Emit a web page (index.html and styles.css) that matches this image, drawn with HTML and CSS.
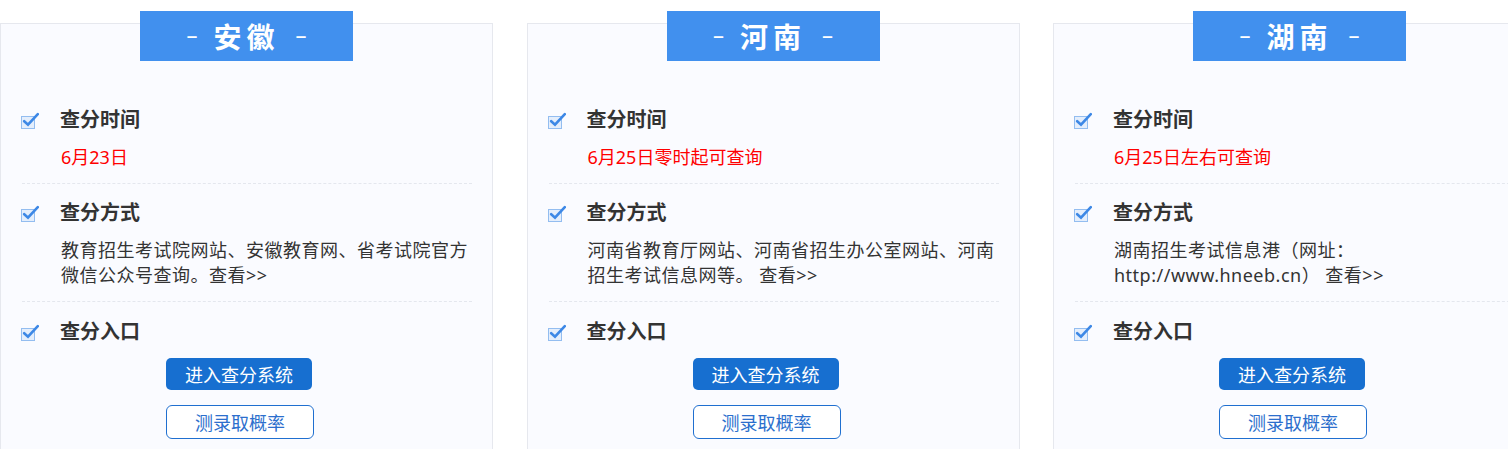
FILE: index.html
```html
<!DOCTYPE html>
<html lang="zh-CN">
<head>
<meta charset="utf-8">
<title>查分</title>
<link rel="stylesheet" href="styles.css">
</head>
<body>
<div class="cards">
  <section class="card">
    <div class="tab"><span class="dash">–</span><span class="name">安徽</span><span class="dash">–</span></div>
    <div class="item">
      <h3 class="head"><svg class="chk" width="18" height="17" viewBox="0 0 18 17"><rect x="0.5" y="4.5" width="13" height="12" fill="#e4eefc" stroke="#93bdf0"/><path d="M3.2 9.2 L7 12.6 L16.8 2.2" stroke="#3d88e6" stroke-width="2.6" fill="none" stroke-linecap="round"/></svg>查分时间</h3>
      <p class="txt red">6月23日</p>
    </div>
    <div class="item">
      <h3 class="head"><svg class="chk" width="18" height="17" viewBox="0 0 18 17"><rect x="0.5" y="4.5" width="13" height="12" fill="#e4eefc" stroke="#93bdf0"/><path d="M3.2 9.2 L7 12.6 L16.8 2.2" stroke="#3d88e6" stroke-width="2.6" fill="none" stroke-linecap="round"/></svg>查分方式</h3>
      <p class="txt">教育招生考试院网站、安徽教育网、省考试院官方微信公众号查询。查看&gt;&gt;</p>
    </div>
    <div class="item last">
      <h3 class="head"><svg class="chk" width="18" height="17" viewBox="0 0 18 17"><rect x="0.5" y="4.5" width="13" height="12" fill="#e4eefc" stroke="#93bdf0"/><path d="M3.2 9.2 L7 12.6 L16.8 2.2" stroke="#3d88e6" stroke-width="2.6" fill="none" stroke-linecap="round"/></svg>查分入口</h3>
      <div class="btns">
        <a class="btn primary">进入查分系统</a>
        <a class="btn outline">测录取概率</a>
      </div>
    </div>
  </section>

  <section class="card">
    <div class="tab"><span class="dash">–</span><span class="name">河南</span><span class="dash">–</span></div>
    <div class="item">
      <h3 class="head"><svg class="chk" width="18" height="17" viewBox="0 0 18 17"><rect x="0.5" y="4.5" width="13" height="12" fill="#e4eefc" stroke="#93bdf0"/><path d="M3.2 9.2 L7 12.6 L16.8 2.2" stroke="#3d88e6" stroke-width="2.6" fill="none" stroke-linecap="round"/></svg>查分时间</h3>
      <p class="txt red">6月25日零时起可查询</p>
    </div>
    <div class="item">
      <h3 class="head"><svg class="chk" width="18" height="17" viewBox="0 0 18 17"><rect x="0.5" y="4.5" width="13" height="12" fill="#e4eefc" stroke="#93bdf0"/><path d="M3.2 9.2 L7 12.6 L16.8 2.2" stroke="#3d88e6" stroke-width="2.6" fill="none" stroke-linecap="round"/></svg>查分方式</h3>
      <p class="txt">河南省教育厅网站、河南省招生办公室网站、河南招生考试信息网等。 查看&gt;&gt;</p>
    </div>
    <div class="item last">
      <h3 class="head"><svg class="chk" width="18" height="17" viewBox="0 0 18 17"><rect x="0.5" y="4.5" width="13" height="12" fill="#e4eefc" stroke="#93bdf0"/><path d="M3.2 9.2 L7 12.6 L16.8 2.2" stroke="#3d88e6" stroke-width="2.6" fill="none" stroke-linecap="round"/></svg>查分入口</h3>
      <div class="btns">
        <a class="btn primary">进入查分系统</a>
        <a class="btn outline">测录取概率</a>
      </div>
    </div>
  </section>

  <section class="card">
    <div class="tab"><span class="dash">–</span><span class="name">湖南</span><span class="dash">–</span></div>
    <div class="item">
      <h3 class="head"><svg class="chk" width="18" height="17" viewBox="0 0 18 17"><rect x="0.5" y="4.5" width="13" height="12" fill="#e4eefc" stroke="#93bdf0"/><path d="M3.2 9.2 L7 12.6 L16.8 2.2" stroke="#3d88e6" stroke-width="2.6" fill="none" stroke-linecap="round"/></svg>查分时间</h3>
      <p class="txt red">6月25日左右可查询</p>
    </div>
    <div class="item">
      <h3 class="head"><svg class="chk" width="18" height="17" viewBox="0 0 18 17"><rect x="0.5" y="4.5" width="13" height="12" fill="#e4eefc" stroke="#93bdf0"/><path d="M3.2 9.2 L7 12.6 L16.8 2.2" stroke="#3d88e6" stroke-width="2.6" fill="none" stroke-linecap="round"/></svg>查分方式</h3>
      <p class="txt">湖南招生考试信息港（网址：<br>http://www.hneeb.cn） 查看&gt;&gt;</p>
    </div>
    <div class="item last">
      <h3 class="head"><svg class="chk" width="18" height="17" viewBox="0 0 18 17"><rect x="0.5" y="4.5" width="13" height="12" fill="#e4eefc" stroke="#93bdf0"/><path d="M3.2 9.2 L7 12.6 L16.8 2.2" stroke="#3d88e6" stroke-width="2.6" fill="none" stroke-linecap="round"/></svg>查分入口</h3>
      <div class="btns">
        <a class="btn primary">进入查分系统</a>
        <a class="btn outline">测录取概率</a>
      </div>
    </div>
  </section>
</div>
</body>
</html>
```

FILE: styles.css
```css
* { box-sizing: border-box; }
html, body { margin: 0; padding: 0; background: #fff; }
body {
  font-family: "Noto Sans", "Noto Sans CJK SC", sans-serif;
  color: #333;
  overflow: hidden;
}
.cards {
  display: flex;
  gap: 33.5px;
  padding-top: 23px;
  width: 1600px;
}
.card {
  flex: 0 0 493px;
  height: 460px;
  border: 1px solid #e6e8ee;
  background: #fafbff;
  display: flex;
  flex-direction: column;
}
.tab {
  align-self: center;
  width: 213px;
  height: 50px;
  margin-top: -13px;
  margin-bottom: 30px;
  background: #4190ee;
  color: #fff;
  display: flex;
  align-items: center;
  justify-content: center;
  gap: 16px;
}
.tab .dash {
  font-size: 22px;
  font-weight: 400;
  line-height: 1;
  position: relative;
  top: -2px;
}
.tab .name {
  font-size: 28px;
  font-weight: 700;
  letter-spacing: 5px;
  margin-right: 0;
  line-height: 1;
  font-family: "Noto Sans CJK SC", sans-serif;
}
.item {
  margin: 0 20px 0 21px;
  padding: 13px 0 13px;
  border-bottom: 1px dashed #e4e7ee;
}
.item.last { border-bottom: none; padding-top: 14px; }
.head {
  margin: 0;
  display: flex;
  align-items: center;
  gap: 21px;
  font-size: 20px;
  font-weight: 700;
  line-height: 30px;
  color: #333;
  font-family: "Noto Sans CJK SC", sans-serif;
}
.chk { display: block; flex: none; margin-left: -1px; position: relative; top: 1px; }
.txt {
  margin: 11px 0 0 39px;
  font-size: 18px;
  line-height: 25px;
  letter-spacing: 0.5px;
  color: #333;
}
.txt.red { color: #ff0000; letter-spacing: 0; }
.btns {
  display: flex;
  flex-direction: column;
  align-items: flex-start;
  gap: 15px;
  margin: 12px 0 0 144px;
}
.btn {
  display: flex;
  align-items: center;
  justify-content: center;
  font-size: 18px;
  font-family: "Noto Sans CJK SC", sans-serif;
  line-height: 1;
}
.btn.primary {
  width: 146px;
  height: 32px;
  background: #176fd0;
  color: #fff;
  border-radius: 5px;
}
.btn.outline {
  width: 148px;
  height: 34px;
  background: #fff;
  color: #2c6fcd;
  border: 1px solid #1f6fd0;
  border-radius: 6px;
}
```
